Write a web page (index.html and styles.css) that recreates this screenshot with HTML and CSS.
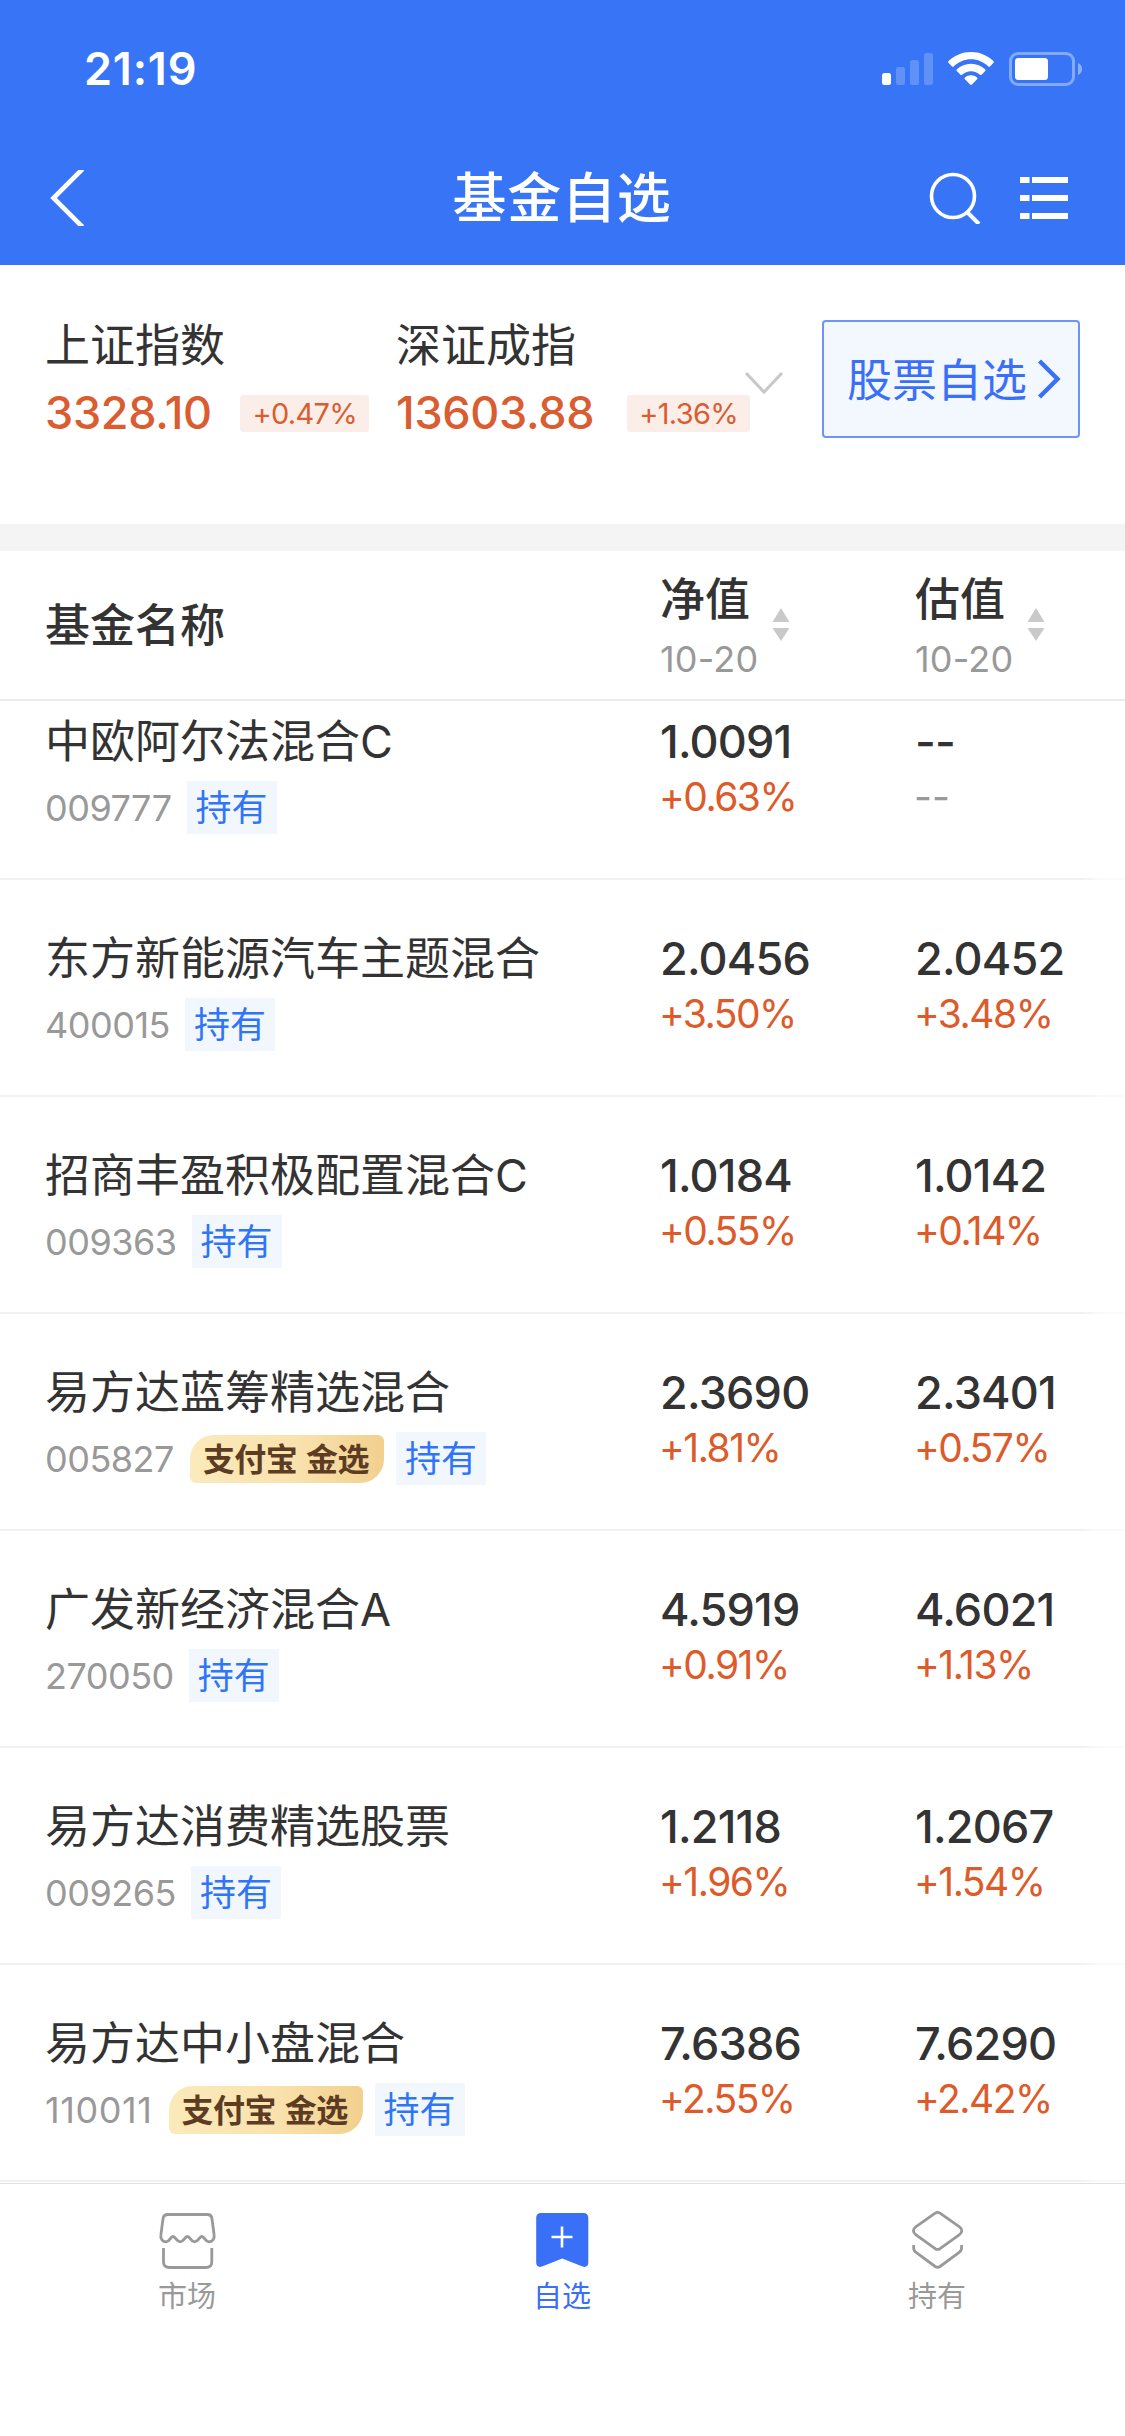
FILE: index.html
```html
<!DOCTYPE html>
<html lang="zh-CN">
<head>
    <meta charset="UTF-8">
    <meta name="viewport" content="width=device-width, initial-scale=1.0">
    <title>基金自选</title>
    <link rel="stylesheet" href="styles.css">
</head>
<body>
    <header class="header">
        <div class="status-bar">
            <span class="time">21:19</span>
            <div class="status-icons">
                <svg class="signal" width="52" height="34" viewBox="0 0 52 34" fill="#fff">
                    <rect x="0" y="21" width="9" height="12" rx="2.5"/>
                    <g opacity="0.2">
                        <rect x="14" y="15" width="9" height="18" rx="2.5"/>
                        <rect x="28" y="8" width="9" height="25" rx="2.5"/>
                        <rect x="42" y="1" width="9" height="32" rx="2.5"/>
                    </g>
                </svg>
                <svg class="wifi" width="46" height="34" viewBox="0 0 46 34" fill="#fff">
                    <path d="M23 0c8.600 0 16.500 3.400 22.400 9 .6.600.6 1.300.1 1.800l-3.500 3.600c-.5.500-1.200.5-1.700 0C35.700 10 29.600 7.300 23 7.300S10.300 10 5.700 14.400c-.5.500-1.200.5-1.700 0L.5 10.800c-.5-.5-.5-1.200.1-1.800C6.500 3.400 14.400 0 23 0z"/>
                    <path d="M23 11.700c5.400 0 10.400 2.100 14.100 5.600.6.600.6 1.300.1 1.800l-3.600 3.600c-.5.500-1.100.5-1.700 0-2.400-2.200-5.500-3.500-8.900-3.500s-6.500 1.300-8.900 3.500c-.6.500-1.200.5-1.700 0l-3.600-3.600c-.5-.5-.5-1.200.1-1.800 3.700-3.500 8.700-5.600 14.100-5.600z"/>
                    <path d="M23 23.300c2.300 0 4.400.8 6 2.200.6.600.6 1.200.1 1.800l-5.200 5.200c-.5.600-1.300.6-1.800 0l-5.200-5.200c-.5-.6-.5-1.200.1-1.800 1.600-1.400 3.700-2.200 6-2.200z"/>
                </svg>
                <svg class="battery" width="74" height="34" viewBox="0 0 74 34">
                    <rect x="1.500" y="1.500" width="63" height="31" rx="7.500" fill="none" stroke="#fff" stroke-opacity="0.38" stroke-width="3"/>
                    <rect x="6" y="6" width="33" height="22" rx="3.500" fill="#fff"/>
                    <path d="M69 11c2.600 1 4 3.200 4 6s-1.400 5-4 6z" fill="#fff" fill-opacity="0.42"/>
                </svg>
            </div>
        </div>
        <div class="nav-bar">
            <svg class="back" width="36" height="56" viewBox="0 0 36 56" fill="none" stroke="#fff" stroke-width="4.600">
                <path d="M33.500-1L4.500 28l29 29"/>
            </svg>
            <h1>基金自选</h1>
            <div class="nav-actions">
                <svg width="52" height="52" viewBox="0 0 52 52" fill="none" stroke="#fff" stroke-width="3.600">
                    <circle cx="24" cy="24" r="21.500"/>
                    <path d="M38 40l12 12" stroke-width="4"/>
                </svg>
                <svg width="48" height="42" viewBox="0 0 48 42" fill="#fff">
                    <path d="M0 0h9.500v6H0zM12 0h36v6H12zM0 18h9.500v6H0zM12 18h36v6H12zM0 36h9.500v6H0zM12 36h36v6H12z"/>
                </svg>
            </div>
        </div>
    </header>

    <section class="indexes">
        <div class="index">
            <div class="index-name">上证指数</div>
            <div class="index-row"><span class="index-value">3328.10</span><span class="rate">+0.47%</span></div>
        </div>
        <div class="index index-second">
            <div class="index-name">深证成指</div>
            <div class="index-row"><span class="index-value">13603.88</span><span class="rate">+1.36%</span></div>
        </div>
        <svg class="expand" width="40" height="24" viewBox="0 0 40 24" fill="none" stroke="#c8c8c8" stroke-width="3">
            <path d="M2 2l18 19L38 2"/>
        </svg>
        <a class="stock-btn">
            <span>股票自选</span>
            <svg width="24" height="40" viewBox="0 0 24 40" fill="none" stroke="#3a6ff7" stroke-width="4.400">
                <path d="M2.500 2l18 18-18 18"/>
            </svg>
        </a>
    </section>

    <section class="table-head">
        <div class="head-name">基金名称</div>
        <div class="head-col">
            <div>
                <div class="head-title">净值</div>
                <div class="head-date">10-20</div>
            </div>
            <svg class="sort" width="18" height="34" viewBox="0 0 18 34" fill="#c9c9c9">
                <path d="M9 0l8.500 14H.5zM9 33L.5 20h17z"/>
            </svg>
        </div>
        <div class="head-col">
            <div>
                <div class="head-title">估值</div>
                <div class="head-date">10-20</div>
            </div>
            <svg class="sort" width="18" height="34" viewBox="0 0 18 34" fill="#c9c9c9">
                <path d="M9 0l8.500 14H.5zM9 33L.5 20h17z"/>
            </svg>
        </div>
    </section>

    <main class="fund-list">
        <div class="fund">
            <div class="info">
                <div class="name">中欧阿尔法混合C</div>
                <div class="sub"><span class="code">009777</span><span class="tag">持有</span></div>
            </div>
            <div class="col"><div class="value">1.0091</div><div class="percent">+0.63%</div></div>
            <div class="col"><div class="value">--</div><div class="percent none">--</div></div>
        </div>
        <div class="fund">
            <div class="info">
                <div class="name">东方新能源汽车主题混合</div>
                <div class="sub"><span class="code">400015</span><span class="tag">持有</span></div>
            </div>
            <div class="col"><div class="value">2.0456</div><div class="percent">+3.50%</div></div>
            <div class="col"><div class="value">2.0452</div><div class="percent">+3.48%</div></div>
        </div>
        <div class="fund">
            <div class="info">
                <div class="name">招商丰盈积极配置混合C</div>
                <div class="sub"><span class="code">009363</span><span class="tag">持有</span></div>
            </div>
            <div class="col"><div class="value">1.0184</div><div class="percent">+0.55%</div></div>
            <div class="col"><div class="value">1.0142</div><div class="percent">+0.14%</div></div>
        </div>
        <div class="fund">
            <div class="info">
                <div class="name">易方达蓝筹精选混合</div>
                <div class="sub"><span class="code">005827</span><span class="gold">支付宝 金选</span><span class="tag">持有</span></div>
            </div>
            <div class="col"><div class="value">2.3690</div><div class="percent">+1.81%</div></div>
            <div class="col"><div class="value">2.3401</div><div class="percent">+0.57%</div></div>
        </div>
        <div class="fund">
            <div class="info">
                <div class="name">广发新经济混合A</div>
                <div class="sub"><span class="code">270050</span><span class="tag">持有</span></div>
            </div>
            <div class="col"><div class="value">4.5919</div><div class="percent">+0.91%</div></div>
            <div class="col"><div class="value">4.6021</div><div class="percent">+1.13%</div></div>
        </div>
        <div class="fund">
            <div class="info">
                <div class="name">易方达消费精选股票</div>
                <div class="sub"><span class="code">009265</span><span class="tag">持有</span></div>
            </div>
            <div class="col"><div class="value">1.2118</div><div class="percent">+1.96%</div></div>
            <div class="col"><div class="value">1.2067</div><div class="percent">+1.54%</div></div>
        </div>
        <div class="fund">
            <div class="info">
                <div class="name">易方达中小盘混合</div>
                <div class="sub"><span class="code wide">110011</span><span class="gold">支付宝 金选</span><span class="tag">持有</span></div>
            </div>
            <div class="col"><div class="value">7.6386</div><div class="percent">+2.55%</div></div>
            <div class="col"><div class="value">7.6290</div><div class="percent">+2.42%</div></div>
        </div>
    </main>

    <nav class="tab-bar">
        <a class="tab">
            <svg width="60" height="60" viewBox="0 0 60 60" fill="none" stroke="#999" stroke-width="2.800" stroke-linejoin="round">
                <path d="M11 3.500h39.500c2.500 0 4 1.200 4.400 3.800l2.200 16.500c.8 4-1.800 7-5.300 7-3.600 0-4.300-5.300-7-5.300s-3.400 5.300-7.200 5.300-4.400-5.300-7.200-5.300-3.400 5.300-7.200 5.300-4.500-5.300-7.200-5.300-3.200 5.300-6.800 5.300c-3.500 0-6.100-3-5.300-7l2.200-16.500c.4-2.600 2.400-3.800 4.900-3.800z"/>
                <path d="M6.500 37v13.500c0 4 2 6 6 6h36.300c4 0 6-2 6-6V37"/>
            </svg>
            <span>市场</span>
        </a>
        <a class="tab active">
            <svg width="60" height="60" viewBox="0 0 60 60">
                <path d="M9 2h42.500c3 0 4.800 1.800 4.800 4.800v45c0 3.300-2.600 5-5.800 3.600L30.300 47.500 10 55.400c-3.200 1.400-5.800-.3-5.800-3.600v-45C4.200 3.800 6 2 9 2z" fill="#3a6ff7"/>
                <path d="M30 15.500v21M19.500 26h21" stroke="#fff" stroke-width="2.600"/>
            </svg>
            <span>自选</span>
        </a>
        <a class="tab">
            <svg width="60" height="60" viewBox="0 0 60 60" fill="none" stroke="#999" stroke-width="2.800" stroke-linejoin="round">
                <path d="M28.200 2.200c1.600-1 3.200-1 4.800 0l19.500 13.600c3 2.200 3 5.600 0 7.800L33 37.700c-1.600 1-3.200 1-4.800 0L8.700 23.600c-3-2.200-3-5.600 0-7.800z"/>
                <path d="M6.800 34c-.6 3.300 0 5.600 1.900 7.200l19.500 14.300c1.600 1 3.200 1 4.800 0l19.500-14.300c1.900-1.600 2.500-3.900 1.900-7.200"/>
            </svg>
            <span>持有</span>
        </a>
    </nav>
</body>
</html>
```
FILE: styles.css
```css
* {
    padding: 0;
    margin: 0;
    box-sizing: border-box;
}

body {
    width: 1125px;
    height: 2436px;
    overflow: hidden;
    background-color: #fff;
    color: #333;
    font-family: Inter, "Noto Sans CJK SC", sans-serif;
}

svg {
    display: block;
    flex: none;
}

/* header */
.header {
    height: 265px;
    background-color: #3875f6;
    color: #fff;
}

.status-bar {
    display: flex;
    justify-content: space-between;
    height: 132px;
    padding: 39px 42px 0 84px;
}

.time {
    font-size: 45px;
    line-height: 60px;
    font-weight: 600;
    letter-spacing: 0.8px;
}

.status-icons {
    display: flex;
    padding-top: 13px;
}

.wifi {
    margin-left: 14px;
}

.battery {
    margin-left: 15px;
}

.nav-bar {
    display: grid;
    grid-template-columns: 1fr auto 1fr;
    align-items: center;
    height: 132px;
    padding: 0 57px 0 49px;
}

.nav-bar h1 {
    padding: 2px 0 0 7px;
    font-size: 54px;
    font-weight: 500;
    line-height: 76px;
    letter-spacing: 0.8px;
}

.nav-actions {
    display: flex;
    align-items: center;
    justify-content: flex-end;
    gap: 39px;
}

/* market indexes */
.indexes {
    display: flex;
    height: 286px;
    padding: 55px 45px 0;
    border-bottom: 27px solid #f4f4f4;
}

.index {
    width: 351px;
}

.index-second {
    width: 354px;
}

.index-name {
    padding-top: 1px;
    font-size: 45px;
    line-height: 50px;
}

.index-row {
    display: flex;
    align-items: center;
    justify-content: space-between;
    height: 60px;
    margin-top: 11px;
    padding-right: 27px;
}

.index-second .index-row {
    padding-right: 0;
}

.index-value {
    color: #d95d30;
    font-size: 45px;
    font-weight: 500;
    letter-spacing: -0.3px;
}

.rate {
    height: 37px;
    margin-top: 3px;
    padding: 0 12px;
    border-radius: 3px;
    background-color: #fbeee9;
    color: #d95d30;
    font-size: 29px;
    line-height: 38px;
    letter-spacing: -0.7px;
}

.expand {
    margin: 51px 0 0 -6px;
}

.stock-btn {
    display: flex;
    align-items: center;
    justify-content: space-between;
    width: 258px;
    height: 118px;
    margin-left: auto;
    padding: 0 17px 0 23px;
    border: 2px solid #6b95f9;
    border-radius: 4px;
    background-color: #f3f7fe;
    color: #3a6ff7;
    font-size: 45px;
}

.stock-btn span {
    padding-bottom: 3px;
}

/* table header */
.table-head {
    display: flex;
    height: 150px;
    padding-left: 45px;
    border-bottom: 2px solid #ebebeb;
}

.head-name {
    flex: none;
    width: 615px;
    font-size: 45px;
    font-weight: 500;
    line-height: 150px;
}

.head-col {
    display: flex;
    flex: none;
    width: 255px;
    padding-top: 21px;
}

.head-title {
    font-size: 45px;
    font-weight: 500;
    line-height: 56px;
}

.head-date {
    color: #999;
    font-size: 36px;
    line-height: 63px;
    letter-spacing: 0.2px;
}

.sort {
    margin: 36px 0 0 14px;
}

/* fund list */
.fund-list {
    height: 1482px;
    overflow: hidden;
}

.fund {
    position: relative;
    display: flex;
    height: 217px;
    padding: 49px 0 0 45px;
}

.fund:first-child {
    margin-top: -38px;
}

.fund:after {
    content: "";
    position: absolute;
    left: 0;
    right: 0;
    bottom: 0;
    height: 2px;
    background: linear-gradient(to right, #f1f1f1 1080px, #fafafa 1100px);
}

.info {
    flex: none;
    width: 615px;
}

.name {
    font-size: 45px;
    line-height: 60px;
}

.sub {
    display: flex;
    align-items: center;
    height: 53px;
    margin-top: 9px;
}

.code {
    color: #999;
    font-size: 36px;
    letter-spacing: -0.5px;
}

.code.wide {
    letter-spacing: 0.6px;
}

.tag {
    height: 53px;
    margin-left: 15px;
    padding: 0 9px;
    background-color: #f2f7fe;
    color: #3075f6;
    font-size: 36px;
    line-height: 55px;
}

.gold {
    width: 194px;
    height: 48px;
    margin-left: 16px;
    padding-left: 13px;
    border-radius: 24px 6px 24px 6px;
    background: linear-gradient(to right, #fbeabb, #fae2ad 55%, #f2d08e);
    color: #5c3c22;
    font-size: 32px;
    font-weight: 700;
    line-height: 49px;
    letter-spacing: -0.6px;
    word-spacing: 2px;
    white-space: nowrap;
}

.gold + .tag {
    margin-left: 12px;
}

.col {
    flex: none;
    width: 255px;
}

.col:last-child {
    width: 210px;
}

.value {
    font-size: 45px;
    font-weight: 500;
    line-height: 60px;
    letter-spacing: -0.8px;
}

.percent {
    margin-left: -1px;
    color: #dd5b2a;
    font-size: 39px;
    line-height: 50px;
    letter-spacing: -1.5px;
}

.percent.none {
    color: #999;
    letter-spacing: 0;
}

/* bottom tabs */
.tab-bar {
    display: flex;
    height: 253px;
    padding-top: 27px;
    border-top: 1px solid #e0e0e0;
}

.tab {
    display: flex;
    flex: 1;
    flex-direction: column;
    align-items: center;
    padding-right: 1px;
    color: #999;
    font-size: 29px;
    line-height: 40px;
}

.tab span {
    margin-top: 6px;
}

.tab.active {
    color: #3a6ff7;
}
```
